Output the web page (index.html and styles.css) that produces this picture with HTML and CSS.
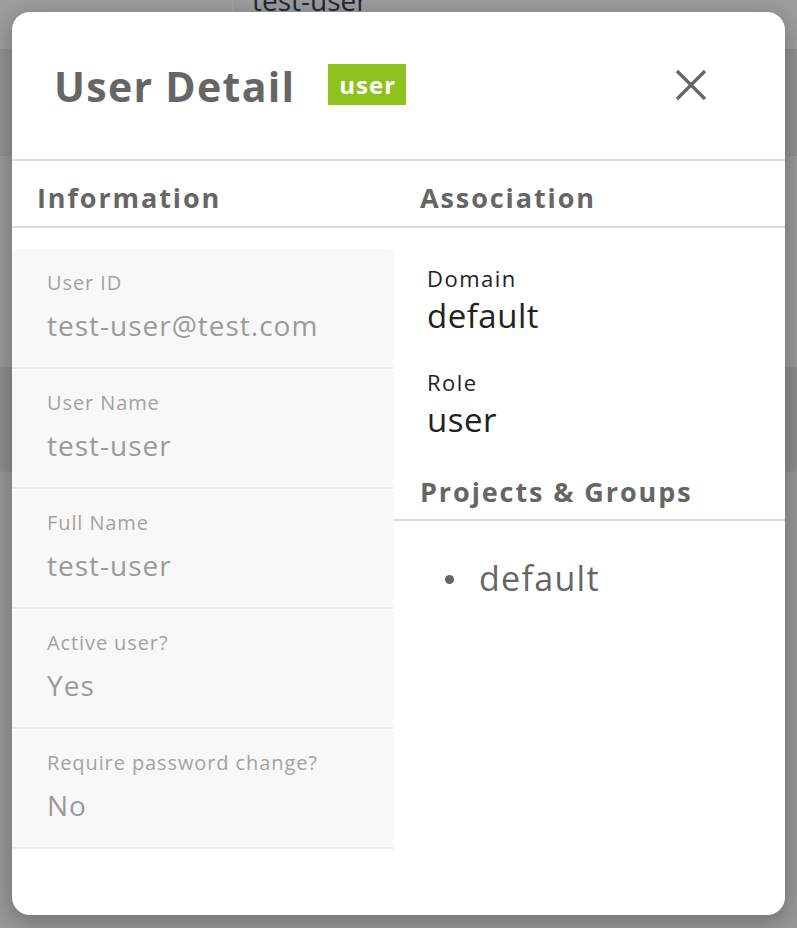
FILE: index.html
```html
<!DOCTYPE html>
<html lang="en">
<head>
<meta charset="utf-8">
<title>User Detail</title>
<link rel="stylesheet" href="styles.css">
</head>
<body>
<div class="page">
  <div class="bg-row bg-row--a"><span class="bg-cell bg-cell--first"></span><span class="bg-cell bg-text">test-user</span></div>
  <div class="bg-row bg-row--b"></div>
  <div class="bg-row bg-row--c"></div>
  <div class="bg-row bg-row--d"></div>
  <div class="bg-row bg-row--e"></div>
</div>

<div class="dialog" role="dialog" aria-label="User Detail">
  <header class="dialog-header">
    <h1 class="dialog-title">User Detail</h1>
    <span class="badge">user</span>
    <button class="close" aria-label="Close">
      <svg width="32" height="32" viewBox="0 0 32 32"><path d="M2 2 L30 30 M30 2 L2 30" stroke="#666" stroke-width="3.2" fill="none"/></svg>
    </button>
  </header>

  <div class="columns">
    <section class="col col--info">
      <h2 class="col-title">Information</h2>
      <div class="cards">
        <div class="card">
          <div class="card-label">User ID</div>
          <div class="card-value">test-user@test.com</div>
        </div>
        <div class="card">
          <div class="card-label">User Name</div>
          <div class="card-value">test-user</div>
        </div>
        <div class="card">
          <div class="card-label">Full Name</div>
          <div class="card-value">test-user</div>
        </div>
        <div class="card">
          <div class="card-label">Active user?</div>
          <div class="card-value">Yes</div>
        </div>
        <div class="card">
          <div class="card-label">Require password change?</div>
          <div class="card-value">No</div>
        </div>
      </div>
    </section>

    <section class="col col--assoc">
      <h2 class="col-title col-title--right">Association</h2>
      <div class="assoc">
        <div class="assoc-item">
          <div class="assoc-label">Domain</div>
          <div class="assoc-value">default</div>
        </div>
        <div class="assoc-item">
          <div class="assoc-label">Role</div>
          <div class="assoc-value">user</div>
        </div>
      </div>
      <h2 class="col-title col-title--right col-title--groups">Projects &amp; Groups</h2>
      <ul class="groups">
        <li>default</li>
      </ul>
    </section>
  </div>
</div>
</body>
</html>
```

FILE: styles.css
```css
* { box-sizing: border-box; }

html, body {
  margin: 0;
  padding: 0;
}

body {
  width: 797px;
  height: 928px;
  overflow: hidden;
  font-family: "Open Sans", "Noto Sans", sans-serif;
  background: #989898;
  position: relative;
}

/* dimmed page behind the modal */
.page {
  display: flex;
  flex-direction: column;
}

.bg-row {
  display: flex;
  border-bottom: 1px solid #8f8f8f;
}

.bg-row--a { height: 50px; background: #9d9d9d; }
.bg-row--b { height: 106px; background: #919191; }
.bg-row--c { height: 212px; background: #999999; }
.bg-row--d { height: 104px; background: #8c8c8c; }
.bg-row--e { height: 456px; background: #989898; border-bottom: 0; }

.bg-cell--first {
  width: 234px;
  border-right: 2px solid #a4a4a4;
}

.bg-text {
  font-size: 28px;
  color: #1f2a33;
  line-height: 1;
  margin-top: -14px;
  padding-left: 18px;
}

/* modal */
.dialog {
  position: absolute;
  left: 12px;
  top: 12px;
  width: 773px;
  height: 903px;
  background: #fff;
  border-radius: 18px;
  box-shadow: 0 6px 24px rgba(0, 0, 0, 0.28);
  overflow: hidden;
}

.dialog-header {
  height: 149px;
  display: flex;
  align-items: center;
  padding: 0 78px 0 42px;
  border-bottom: 2px solid #e0e0e0;
}

.dialog-title {
  margin: 0;
  font-size: 41px;
  font-weight: 700;
  letter-spacing: 1.3px;
  color: #666;
}

.badge {
  margin-left: 33px;
  background: #8fc21c;
  color: #fff;
  font-weight: 700;
  font-size: 24px;
  letter-spacing: 1px;
  height: 41px;
  padding: 0 10px 0 11px;
  display: flex;
  align-items: center;
  margin-top: -2px;
}

.close {
  margin-left: auto;
  border: 0;
  background: none;
  padding: 0;
  width: 32px;
  height: 32px;
  margin-top: -2px;
}

.close svg { display: block; }

.columns {
  display: flex;
}

.col--info { width: 382px; }
.col--assoc { flex: 1; }

.col-title {
  margin: 0;
  height: 67px;
  display: flex;
  align-items: center;
  padding: 7px 0 0 25px;
  font-size: 27px;
  font-weight: 700;
  letter-spacing: 1.9px;
  color: #666;
  border-bottom: 2px solid #dcdcdc;
}

.col-title--right { padding-left: 26px; }

.cards {
  margin-top: 21px;
}

.card {
  height: 120px;
  background: #f8f8f8;
  border-radius: 6px 6px 0 0;
  border-bottom: 2px solid #ececec;
  padding: 21px 0 0 35px;
}

.card-label {
  font-size: 20px;
  letter-spacing: 0.9px;
  color: #a3a3a3;
  line-height: 26px;
}

.card-value {
  margin-top: 12px;
  font-size: 28px;
  letter-spacing: 1px;
  color: #9b9b9b;
  line-height: 34px;
}

.assoc {
  padding: 37px 0 0 33px;
}

.assoc-item + .assoc-item {
  margin-top: 35px;
}

.assoc-label {
  font-size: 22px;
  letter-spacing: 1.5px;
  color: #222;
  line-height: 26px;
}

.assoc-value {
  margin-top: 7px;
  font-size: 33px;
  letter-spacing: 0.5px;
  color: #222;
  line-height: 36px;
}

.col-title--groups {
  margin-top: 19px;
  height: 64px;
}

.groups {
  list-style: none;
  margin: 0;
  padding: 37px 0 0 51px;
  font-size: 34px;
  color: #666;
  letter-spacing: 1.3px;
  line-height: 40px;
}

.groups li {
  display: flex;
  align-items: center;
}

.groups li::before {
  content: "";
  flex: none;
  width: 9px;
  height: 9px;
  border-radius: 50%;
  background: #666;
  margin: 2px 25px 0 0;
}
```
